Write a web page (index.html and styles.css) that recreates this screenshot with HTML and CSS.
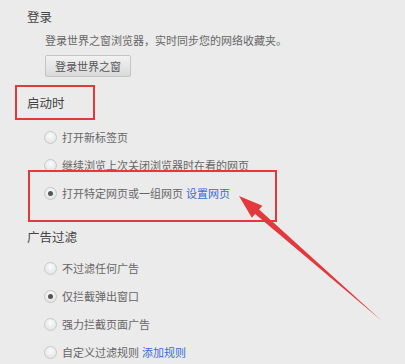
FILE: index.html
```html
<!DOCTYPE html>
<html>
	<head>
		<meta charset="utf-8">
		<title>设置</title>
		<link rel="stylesheet" href="styles.css">
	</head>
	<body>
		<div class="page">
			<div class="section login">
				<h3 class="title">登录</h3>
				<div class="body">
					<p class="desc">登录世界之窗浏览器，实时同步您的网络收藏夹。</p>
					<button class="btn">登录世界之窗</button>
				</div>
			</div>

			<div class="section startup">
				<h3 class="title">启动时</h3>
				<ul class="body options">
					<li class="option"><span class="radio"></span>打开新标签页</li>
					<li class="option"><span class="radio"></span>继续浏览上次关闭浏览器时在看的网页</li>
					<li class="option"><span class="radio checked"></span>打开特定网页或一组网页 <a class="link" href="#">设置网页</a></li>
				</ul>
			</div>

			<div class="section adblock">
				<h3 class="title">广告过滤</h3>
				<ul class="body options">
					<li class="option"><span class="radio"></span>不过滤任何广告</li>
					<li class="option"><span class="radio checked"></span>仅拦截弹出窗口</li>
					<li class="option"><span class="radio"></span>强力拦截页面广告</li>
					<li class="option"><span class="radio"></span>自定义过滤规则 <a class="link" href="#">添加规则</a></li>
				</ul>
			</div>

			<!-- 标注：红框和箭头 -->
			<svg class="marks" width="405" height="364" viewBox="0 0 405 364">
				<rect x="16" y="86" width="78" height="33" fill="none" stroke="#e4393c" stroke-width="2"/>
				<rect x="29" y="171" width="247" height="50" fill="none" stroke="#e4393c" stroke-width="2"/>
				<polygon fill="#e4393c" points="239,196 262.4,205.8 259.1,209.5 382,321 255.1,214.1 251.8,217.8"/>
			</svg>
		</div>
	</body>
</html>
```

FILE: styles.css
```css
*{
	margin: 0;
	padding: 0;
}

ul{
	list-style: none;
}

body{
	background-color: #ebebeb;
	font-family: "Noto Sans CJK SC", "Liberation Sans", sans-serif;
	font-size: 11px;
	color: #666;
}

.page{
	position: relative;
	width: 405px;
	height: 364px;
	padding-top: 7px;
	box-sizing: border-box;
	overflow: hidden;
}

.section{
	padding-left: 27px;
}

.section .title{
	font-size: 12.5px;
	font-weight: normal;
	line-height: 20px;
	color: #444;
}

.section .body{
	padding-left: 18px;
}

.login .title{
	margin-bottom: 3px;
}

.login .desc{
	line-height: 20px;
}

.login .btn{
	margin-top: 5px;
	height: 22px;
	padding: 0 9px;
	font-family: inherit;
	font-size: 11px;
	color: #555;
	background: linear-gradient(#f2f2f2, #dadada);
	border: 1px solid #c4c4c4;
	border-radius: 2px;
}

.startup{
	margin-top: 16px;
}

.startup .options{
	margin-top: 10px;
}

.adblock{
	margin-top: 20px;
}

.adblock .options{
	margin-top: 7px;
}

.options .option{
	display: flex;
	align-items: center;
	height: 28px;
	white-space: nowrap;
}

.radio{
	width: 13px;
	height: 13px;
	margin-right: 5px;
	margin-left: -1px;
	border: 1px solid #c8c8c8;
	border-radius: 50%;
	box-sizing: border-box;
	background: radial-gradient(circle at 50% 35%, #fbfbfb, #dedede);
	display: flex;
	align-items: center;
	justify-content: center;
	flex: none;
}

.radio.checked::after{
	content: "";
	width: 5px;
	height: 5px;
	border-radius: 50%;
	background-color: #555;
}

.link{
	color: #3a6bd0;
	text-decoration: none;
	margin-left: 3px;
}

.marks{
	position: absolute;
	left: 0;
	top: 0;
	pointer-events: none;
}
```
